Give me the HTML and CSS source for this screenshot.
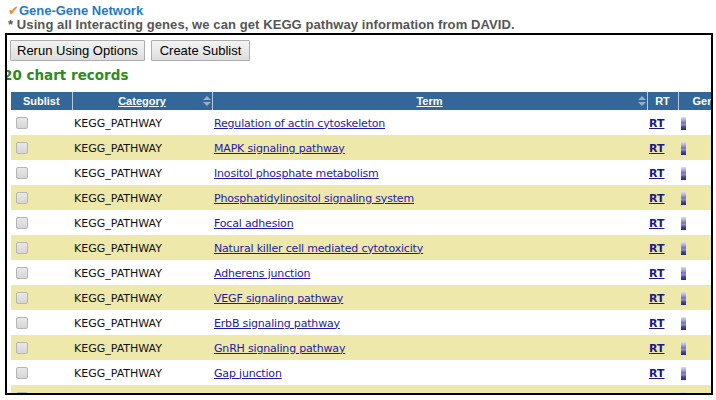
FILE: index.html
```html
<!DOCTYPE html>
<html>
<head>
<meta charset="utf-8">
<link rel="stylesheet" href="styles.css">
</head>
<body>
<div class="title"><span class="check">&#10004;</span><a class="title-link">Gene-Gene Network</a></div>
<div class="note">* Using all Interacting genes, we can get KEGG pathway information from DAVID.</div>
<div class="box">
  <div class="inner">
    <div class="buttons">
      <button class="btn btn-first">Rerun Using Options</button>
      <button class="btn">Create Sublist</button>
    </div>
    <div class="records">20 chart records</div>
    <table class="chart">
      <colgroup>
        <col class="c-sub"><col class="c-cat"><col class="c-term"><col class="c-rt"><col class="c-gen">
      </colgroup>
      <thead>
        <tr>
          <th>Sublist</th>
          <th class="sortable"><a>Category</a><span class="sort"></span></th>
          <th class="sortable"><a>Term</a><span class="sort"></span></th>
          <th>RT</th>
          <th class="gen">Genes</th>
        </tr>
      </thead>
      <tbody>
        <tr><td><span class="cb"></span></td><td>KEGG_PATHWAY</td><td><a class="term">Regulation of actin cytoskeleton</a></td><td><a class="rt">RT</a></td><td><span class="bar"></span></td></tr>
        <tr class="alt"><td><span class="cb"></span></td><td>KEGG_PATHWAY</td><td><a class="term">MAPK signaling pathway</a></td><td><a class="rt">RT</a></td><td><span class="bar"></span></td></tr>
        <tr><td><span class="cb"></span></td><td>KEGG_PATHWAY</td><td><a class="term">Inositol phosphate metabolism</a></td><td><a class="rt">RT</a></td><td><span class="bar"></span></td></tr>
        <tr class="alt"><td><span class="cb"></span></td><td>KEGG_PATHWAY</td><td><a class="term">Phosphatidylinositol signaling system</a></td><td><a class="rt">RT</a></td><td><span class="bar"></span></td></tr>
        <tr><td><span class="cb"></span></td><td>KEGG_PATHWAY</td><td><a class="term">Focal adhesion</a></td><td><a class="rt">RT</a></td><td><span class="bar"></span></td></tr>
        <tr class="alt"><td><span class="cb"></span></td><td>KEGG_PATHWAY</td><td><a class="term">Natural killer cell mediated cytotoxicity</a></td><td><a class="rt">RT</a></td><td><span class="bar"></span></td></tr>
        <tr><td><span class="cb"></span></td><td>KEGG_PATHWAY</td><td><a class="term">Adherens junction</a></td><td><a class="rt">RT</a></td><td><span class="bar"></span></td></tr>
        <tr class="alt"><td><span class="cb"></span></td><td>KEGG_PATHWAY</td><td><a class="term">VEGF signaling pathway</a></td><td><a class="rt">RT</a></td><td><span class="bar"></span></td></tr>
        <tr><td><span class="cb"></span></td><td>KEGG_PATHWAY</td><td><a class="term">ErbB signaling pathway</a></td><td><a class="rt">RT</a></td><td><span class="bar"></span></td></tr>
        <tr class="alt"><td><span class="cb"></span></td><td>KEGG_PATHWAY</td><td><a class="term">GnRH signaling pathway</a></td><td><a class="rt">RT</a></td><td><span class="bar"></span></td></tr>
        <tr><td><span class="cb"></span></td><td>KEGG_PATHWAY</td><td><a class="term">Gap junction</a></td><td><a class="rt">RT</a></td><td><span class="bar"></span></td></tr>
        <tr class="alt"><td><span class="cb"></span></td><td>KEGG_PATHWAY</td><td><a class="term">Long-term potentiation</a></td><td><a class="rt">RT</a></td><td><span class="bar"></span></td></tr>
      </tbody>
    </table>
  </div>
</div>
</body>
</html>
```

FILE: styles.css
```css
html, body {
  margin: 0;
  padding: 0;
  background: #ffffff;
}
body {
  font-family: "Liberation Sans", Arial, sans-serif;
}
.title {
  height: 15px;
  padding: 3px 0 0 8px;
  font-size: 13px;
  font-weight: bold;
  line-height: 15px;
  white-space: nowrap;
}
.check {
  color: #f08a24;
  font-family: "DejaVu Sans", sans-serif;
  font-size: 13px;
  margin-right: 0;
}
.title-link {
  color: #1c7acc;
}
.note {
  padding: 0 0 0 8px;
  height: 15px;
  font-size: 13px;
  font-weight: bold;
  line-height: 14px;
  letter-spacing: 0.09px;
  color: #555555;
  white-space: nowrap;
}
.box {
  margin-left: 5px;
  width: 704px;
  height: 358px;
  border: 2px solid #000000;
  overflow: hidden;
}
.inner {
  padding-top: 5px;
}
.buttons {
  display: flex;
  gap: 6px;
  padding-left: 3px;
  height: 21px;
}
.btn {
  height: 21px;
  margin: 0;
  padding: 0 8px;
  font-family: "Liberation Sans", Arial, sans-serif;
  font-size: 13px;
  color: #000000;
  background: linear-gradient(#f3f3f3, #dedede);
  border: 1px solid #adadad;
  border-radius: 1px;
}
.btn-first {
  padding: 0 6px;
}
.records {
  margin: 6px 0 0 -4px;
  height: 25px;
  font-family: "DejaVu Sans", Verdana, sans-serif;
  font-weight: bold;
  font-size: 13.5px;
  line-height: 17px;
  color: #2f8a1e;
}
.chart {
  margin-left: 4px;
  border-collapse: collapse;
  table-layout: fixed;
  width: 760px;
  font-family: "DejaVu Sans", Verdana, sans-serif;
  font-size: 11px;
}
.c-sub { width: 61px; }
.c-cat { width: 140px; }
.c-term { width: 435px; }
.c-rt { width: 31px; }
.c-gen { width: 93px; }
.chart th {
  height: 18px;
  padding: 0;
  background: #336699;
  color: #ffffff;
  font-family: "Liberation Sans", Arial, sans-serif;
  font-weight: bold;
  font-size: 11px;
  text-align: center;
  border-left: 1px solid #b8c8dc;
  position: relative;
  white-space: nowrap;
  overflow: hidden;
}
.chart th:first-child {
  border-left: none;
}
.chart th.gen {
  text-align: left;
  padding-left: 14px;
}
.chart th a {
  color: #ffffff;
  text-decoration: underline;
}
.sort {
  position: absolute;
  right: 1px;
  top: 4px;
  width: 8px;
  height: 11px;
}
.sort::before, .sort::after {
  content: "";
  position: absolute;
  left: 0;
  border-left: 4px solid transparent;
  border-right: 4px solid transparent;
}
.sort::before {
  top: 0;
  border-bottom: 4px solid #9ab0c6;
}
.sort::after {
  bottom: 1px;
  border-top: 4px solid #9ab0c6;
}
.chart td {
  box-sizing: border-box;
  height: 25px;
  padding: 1px 0 0 0;
  color: #111111;
  white-space: nowrap;
  overflow: hidden;
  vertical-align: middle;
}
.chart td:nth-child(1) { padding-left: 5px; }
.chart td:nth-child(2) { padding-left: 2px; }
.chart td:nth-child(3) { padding-left: 2px; }
.chart td:nth-child(4) { padding-left: 2px; }
.chart td:nth-child(5) { padding-left: 3px; }
.chart tr.alt td {
  background: #eee8aa;
}
.cb {
  display: block;
  width: 10px;
  height: 10px;
  border: 1px solid #b5b5b5;
  border-radius: 2px;
  background: linear-gradient(#e8e8e8, #d6d6d6);
}
.term {
  color: #1d1aa8;
  text-decoration: underline;
  letter-spacing: -0.18px;
}
.rt {
  color: #1a1a80;
  font-weight: bold;
  text-decoration: underline;
}
.bar {
  display: block;
  width: 5px;
  height: 13px;
  background: linear-gradient(#dcdcf8 0%, #a8a8e0 25%, #7070c0 45%, #9090d0 60%, #4a4aa0 75%, #2a2a70 100%);
}
```
